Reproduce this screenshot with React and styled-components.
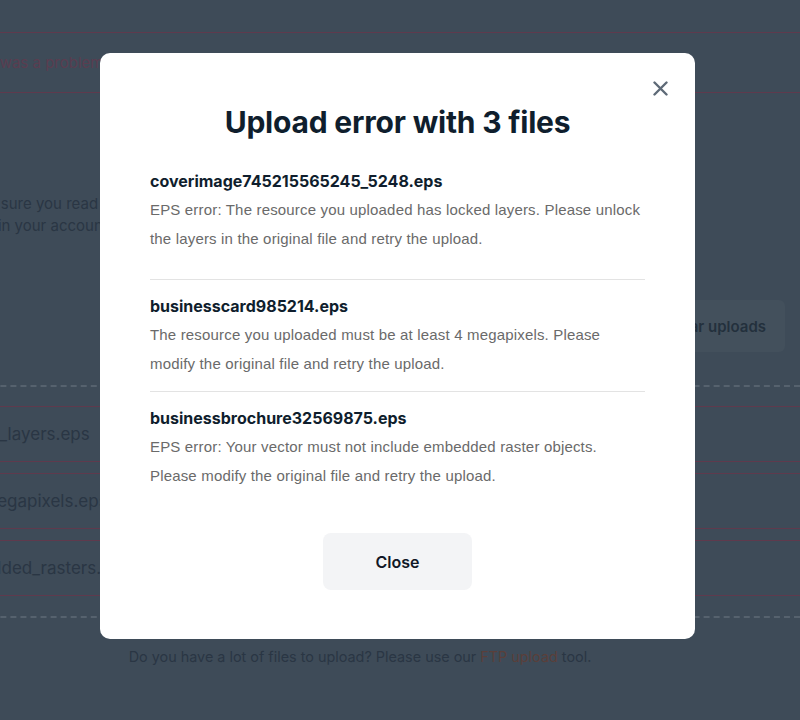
import React from 'react'
import styled, { createGlobalStyle } from 'styled-components'

const GlobalStyle = createGlobalStyle`
  html, body {
    margin: 0;
    padding: 0;
    background: #3e4b58;
    overflow: hidden;
  }
  body {
    font-family: Inter, "Noto Sans", sans-serif;
  }
`

const colors = {
  backdrop: '#3e4b58',
  dimText: '#2a3644',
  dimRed: '#5f3a4d',
  dimRedText: '#5a3d50',
  dimLink: '#5a3f3a',
  dimDash: '#56626e',
  ink: '#0f1e2d',
  muted: '#6a6a6a',
}

/* ---------- page behind the dialog ---------- */

const Page = styled.div`
  display: flex;
  justify-content: center;
  width: 800px;
  height: 720px;
  padding-right: 80px;
  box-sizing: border-box;
  overflow: hidden;
`

const Content = styled.main`
  flex: 0 0 880px;
  padding-top: 32px;
  color: ${colors.dimText};
  font-size: 15px;
`

const Alert = styled.div`
  border-top: 1px solid ${colors.dimRed};
  border-bottom: 1px solid ${colors.dimRed};
  height: 59px;
  display: flex;
  align-items: center;
  padding: 0 34px;
  color: ${colors.dimRedText};
`

const Intro = styled.p`
  margin: 100px 0 0 38px;
  width: 700px;
  line-height: 22px;
`

const ActionsRow = styled.div`
  display: flex;
  justify-content: flex-end;
  margin-top: 63px;
  padding-right: 15px;
`

const GhostButton = styled.button`
  border: 0;
  border-radius: 6px;
  background: #43505c;
  color: #23303d;
  font: 600 15px Inter, sans-serif;
  height: 52px;
  padding: 0 19px;
`

const Dashed = styled.div`
  border-top: 2px dashed ${colors.dimDash};
  margin-top: ${p => p.$gap}px;
`

const FileList = styled.ul`
  list-style: none;
  margin: 19px 0 0;
  padding: 0;
  display: flex;
  flex-direction: column;
  gap: 11px;
`

const FileRow = styled.li`
  border-top: 1px solid ${colors.dimRed};
  border-bottom: 1px solid ${colors.dimRed};
  height: 54px;
  display: flex;
  align-items: center;
  padding-left: 26px;
  font-size: 17px;
`

const Footnote = styled.p`
  margin: 28px 0 0;
  text-align: center;
  font-size: 14.4px;
  line-height: 22px;
`

const Link = styled.a`
  color: ${colors.dimLink};
  text-decoration: none;
`

/* ---------- dialog ---------- */

const Overlay = styled.div`
  position: fixed;
  inset: 0;
  display: flex;
  justify-content: center;
  align-items: flex-start;
  padding: 53px 5px 0 0;
`

const Dialog = styled.section`
  position: relative;
  width: 595px;
  box-sizing: border-box;
  background: #fff;
  border-radius: 10px;
  padding: 51px 50px 49px;
  display: flex;
  flex-direction: column;
`

const CloseIcon = styled.button`
  position: absolute;
  top: 26px;
  right: 26px;
  width: 18px;
  height: 18px;
  padding: 0;
  border: 0;
  background: none;
  display: flex;
  align-items: center;
  justify-content: center;
  color: #5e6a77;
`

const Title = styled.h2`
  margin: 0;
  text-align: center;
  font-size: 30px;
  line-height: 36px;
  font-weight: 700;
  color: ${colors.ink};
  letter-spacing: -0.2px;
`

const Errors = styled.div`
  margin-top: 31px;
`

const ErrorItem = styled.div`
  padding: 16px 0 13px;
  border-bottom: 1px solid #e3e3e3;

  &:first-child {
    padding: 0 0 26px;
  }
  &:last-child {
    border-bottom: 0;
    padding-bottom: 0;
  }
`

const FileName = styled.div`
  font-size: 16px;
  line-height: 20px;
  font-weight: 700;
  color: ${colors.ink};
`

const Message = styled.p`
  margin: 4px 0 0;
  font-family: "Liberation Sans", Arial, sans-serif;
  font-size: 15px;
  line-height: 29px;
  letter-spacing: 0.17px;
  color: ${colors.muted};
`

const Footer = styled.div`
  display: flex;
  justify-content: center;
  margin-top: 43px;
`

const CloseButton = styled.button`
  width: 149px;
  height: 57px;
  border: 0;
  border-radius: 8px;
  background: #f3f4f6;
  color: #111827;
  font: 600 16px Inter, sans-serif;
`

const errors = [
  {
    name: 'coverimage745215565245_5248.eps',
    message:
      'EPS error: The resource you uploaded has locked layers. Please unlock the layers in the original file and retry the upload.',
  },
  {
    name: 'businesscard985214.eps',
    message:
      'The resource you uploaded must be at least 4 megapixels. Please modify the original file and retry the upload.',
  },
  {
    name: 'businessbrochure32569875.eps',
    message:
      'EPS error: Your vector must not include embedded raster objects. Please modify the original file and retry the upload.',
  },
]

const failedFiles = ['locked_layers.eps', 'low_megapixels.eps', 'embedded_rasters.eps']

export default function App() {
  return (
    <>
      <GlobalStyle />
      <Page>
        <Content>
          <Alert>There was a problem uploading some of your files.</Alert>
          <Intro>
            Make sure you read our contributor guidelines before uploading. You will find
            <br />
            them in your account settings, together with the file requirements.
          </Intro>
          <ActionsRow>
            <GhostButton>Clear uploads</GhostButton>
          </ActionsRow>
          <Dashed $gap={33} />
          <FileList>
            {failedFiles.map(f => (
              <FileRow key={f}>{f}</FileRow>
            ))}
          </FileList>
          <Dashed $gap={20} />
          <Footnote>
            Do you have a lot of files to upload? Please use our <Link href="#">FTP upload</Link> tool.
          </Footnote>
        </Content>
      </Page>

      <Overlay>
        <Dialog role="dialog" aria-labelledby="upload-error-title">
          <CloseIcon aria-label="Close">
            <svg width="15" height="15" viewBox="0 0 15 15" fill="none">
              <path d="M1.5 1.5l12 12M13.5 1.5l-12 12" stroke="currentColor" strokeWidth="2.4" strokeLinecap="round" />
            </svg>
          </CloseIcon>
          <Title id="upload-error-title">Upload error with 3 files</Title>
          <Errors>
            {errors.map(e => (
              <ErrorItem key={e.name}>
                <FileName>{e.name}</FileName>
                <Message>{e.message}</Message>
              </ErrorItem>
            ))}
          </Errors>
          <Footer>
            <CloseButton>Close</CloseButton>
          </Footer>
        </Dialog>
      </Overlay>
    </>
  )
}
